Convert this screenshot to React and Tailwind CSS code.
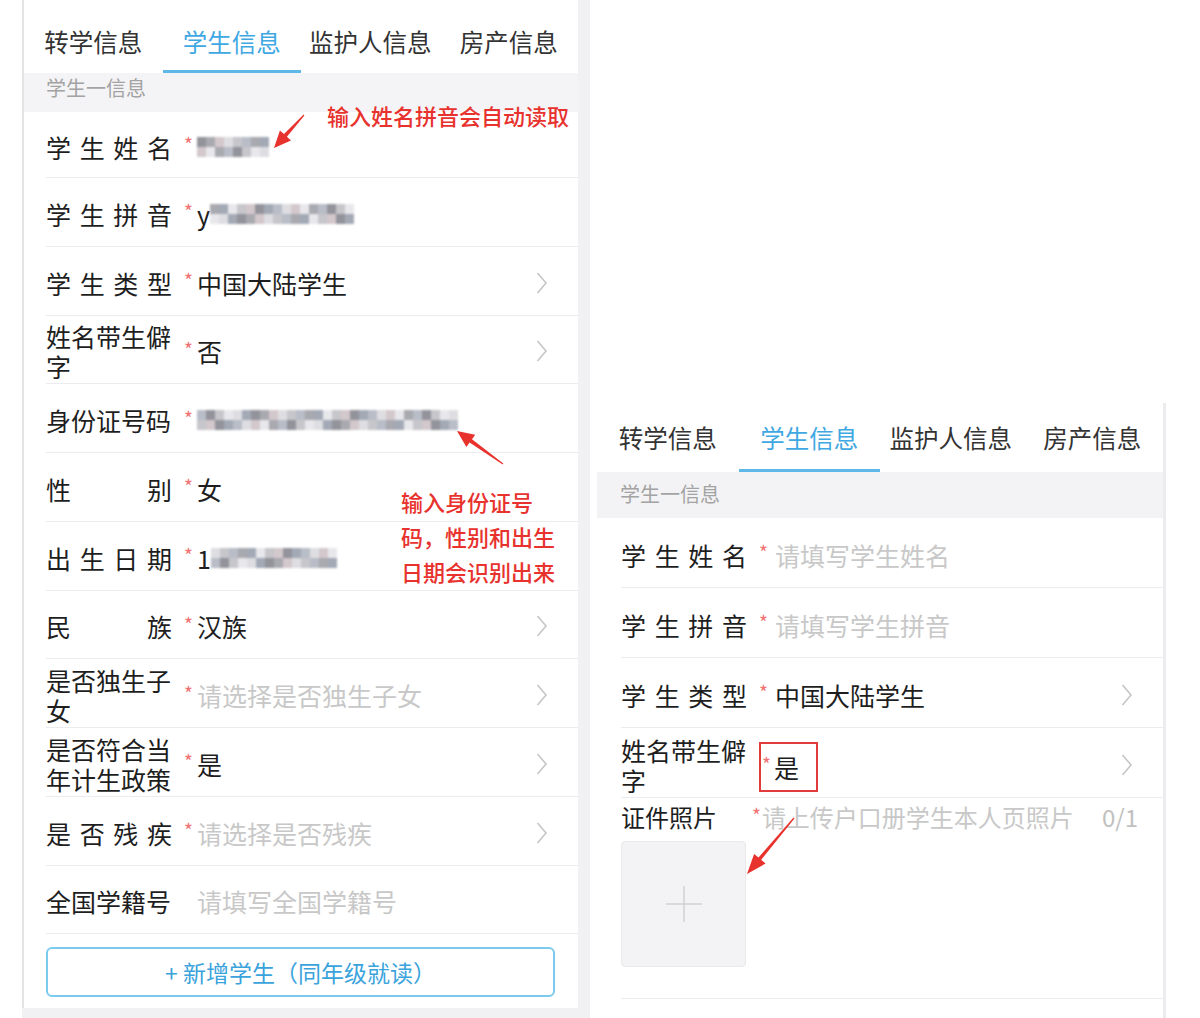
import React from "react";

const PALETTE = [
  "bg-[#c6c6cb]",
  "bg-[#a9a9b0]",
  "bg-[#dedee2]",
  "bg-[#93939b]",
  "bg-[#e8e8ec]",
  "bg-[#b9bdc7]",
  "bg-[#d3c8cc]",
  "bg-[#a3a9b5]",
];

function Mosaic({ cells, seed = 0 }) {
  const rows = [0, 1];
  return (
    <div className="flex flex-col blur-[0.8px]">
      {rows.map((r) => (
        <div key={r} className="flex">
          {Array.from({ length: cells }).map((_, i) => (
            <div
              key={i}
              className={`w-[9px] h-[10px] ${PALETTE[(i * 5 + r * 3 + seed + ((i * i) % 3)) % 8]}`}
            />
          ))}
        </div>
      ))}
    </div>
  );
}

function Label({ text, w = "w-[126px]" }) {
  if (text.length <= 4) {
    return (
      <div className={`${w} flex-none flex justify-between text-[25px] leading-[32px] text-[#1e1e1e]`}>
        {text.split("").map((c, i) => (
          <span key={i}>{c}</span>
        ))}
      </div>
    );
  }
  return (
    <div className={`${w} flex-none break-all text-[25px] leading-[30px] text-[#1e1e1e]`}>{text}</div>
  );
}

function Star() {
  return <span className="text-[19px] leading-none text-[#f07272] mb-[6px]">*</span>;
}

function Chevron() {
  return (
    <svg width="12" height="24" viewBox="0 0 12 24" className="ml-auto flex-none">
      <polyline points="1.5,2 10,12 1.5,22" fill="none" stroke="#c6c6c6" strokeWidth="1.6" />
    </svg>
  );
}

function Tabs({ variant }) {
  const tabs = ["转学信息", "学生信息", "监护人信息", "房产信息"];
  const rowCls = variant === "left" ? "h-[73px]" : "h-[69px]";
  const padCls = variant === "left" ? "pt-[26px]" : "pt-[19px]";
  return (
    <div className={`flex ${rowCls}`}>
      {tabs.map((t, i) => (
        <div
          key={t}
          className={`flex-1 flex justify-center ${padCls} text-[24.5px] leading-[32px] ${
            i === 1 ? "border-b-[3px] border-[#5db8e8] text-[#3fa8e2]" : "text-[#333333]"
          }`}
        >
          {t}
        </div>
      ))}
    </div>
  );
}

function Value({ children, placeholder }) {
  return (
    <div className={`text-[25px] leading-[32px] ${placeholder ? "text-[#c8c8c8]" : "text-[#1e1e1e]"}`}>
      {children}
    </div>
  );
}

function LeftRow({ label, req = true, children, chevron, first }) {
  return (
    <div
      className={`flex items-center pt-[4px] pr-[30px] border-b border-[#ececee] ${
        first ? "h-[66px]" : "h-[68.75px]"
      }`}
    >
      <Label text={label} />
      <div className="w-[25px] flex-none flex items-center pl-[12px]">{req ? <Star /> : null}</div>
      <div className="flex items-center">{children}</div>
      {chevron ? <Chevron /> : null}
    </div>
  );
}

function RightRow({ label, children, chevron }) {
  return (
    <div className="flex items-center pt-[4px] pr-[30px] h-[70px] border-b border-[#ececee]">
      <Label text={label} />
      {children}
      {chevron ? <Chevron /> : null}
    </div>
  );
}

function arrowPoints(x1, y1, x2, y2, headLen, headW, shaftW) {
  const dx = x2 - x1;
  const dy = y2 - y1;
  const L = Math.hypot(dx, dy);
  const ux = dx / L;
  const uy = dy / L;
  const px = -uy;
  const py = ux;
  const bx = x2 - ux * headLen;
  const by = y2 - uy * headLen;
  const pts = [
    [x1 + px * 0.6, y1 + py * 0.6],
    [bx + (px * shaftW) / 2, by + (py * shaftW) / 2],
    [bx + (px * headW) / 2, by + (py * headW) / 2],
    [x2, y2],
    [bx - (px * headW) / 2, by - (py * headW) / 2],
    [bx - (px * shaftW) / 2, by - (py * shaftW) / 2],
    [x1 - px * 0.6, y1 - py * 0.6],
  ];
  return pts.map((p) => p.map((v) => v.toFixed(1)).join(",")).join(" ");
}

export default function App() {
  return (
    <div className="relative w-[1200px] h-[1018px] bg-white overflow-hidden flex items-start font-['Noto_Sans_CJK_SC','Noto_Sans',sans-serif]">
      {/* Left phone screen */}
      <div className="ml-[22px] w-[568px] h-[1018px] flex-none bg-[#f1f1f3]">
        <div className="w-[556px] h-[1008px] bg-white border-l-2 border-[#e4e4e7] flex flex-col">
          <Tabs variant="left" />
          <div className="h-[39px] bg-[#f4f4f6] pl-[22px] pt-[4px] text-[20px] leading-[22px] text-[#a3a3a3]">
            学生一信息
          </div>
          <div className="pl-[22px] flex flex-col">
            <LeftRow label="学生姓名" first>
              <Mosaic cells={8} seed={3} />
            </LeftRow>
            <LeftRow label="学生拼音">
              <Value>y</Value>
              <Mosaic cells={16} seed={1} />
            </LeftRow>
            <LeftRow label="学生类型" chevron>
              <Value>中国大陆学生</Value>
            </LeftRow>
            <LeftRow label="姓名带生僻字" chevron>
              <Value>否</Value>
            </LeftRow>
            <LeftRow label="身份证号码">
              <Mosaic cells={29} seed={5} />
            </LeftRow>
            <LeftRow label="性别">
              <Value>女</Value>
            </LeftRow>
            <LeftRow label="出生日期">
              <Value>1</Value>
              <Mosaic cells={14} seed={2} />
            </LeftRow>
            <LeftRow label="民族" chevron>
              <Value>汉族</Value>
            </LeftRow>
            <LeftRow label="是否独生子女" chevron>
              <Value placeholder>请选择是否独生子女</Value>
            </LeftRow>
            <LeftRow label="是否符合当年计生政策" chevron>
              <Value>是</Value>
            </LeftRow>
            <LeftRow label="是否残疾" chevron>
              <Value placeholder>请选择是否残疾</Value>
            </LeftRow>
            <LeftRow label="全国学籍号" req={false}>
              <Value placeholder>请填写全国学籍号</Value>
            </LeftRow>
            <button className="mt-[13px] w-[509px] h-[50px] rounded-[6px] border-2 border-[#7ccbee] bg-white text-[23px] leading-[30px] text-[#3aa3dc] flex items-center justify-center">
              + 新增学生（同年级就读）
            </button>
          </div>
        </div>
      </div>

      {/* Right phone screen */}
      <div className="mt-[403px] ml-[7px] w-[569px] h-[615px] flex-none bg-white border-r-[3px] border-[#ececef] flex flex-col">
        <Tabs variant="right" />
        <div className="h-[46px] bg-[#f3f3f5] pl-[23px] pt-[11px] text-[20px] leading-[22px] text-[#a3a3a3]">
          学生一信息
        </div>
        <div className="pl-[24px] flex flex-col">
          <RightRow label="学生姓名">
            <div className="w-[28px] flex-none flex items-center pl-[12px]">
              <Star />
            </div>
            <Value placeholder>请填写学生姓名</Value>
          </RightRow>
          <RightRow label="学生拼音">
            <div className="w-[28px] flex-none flex items-center pl-[12px]">
              <Star />
            </div>
            <Value placeholder>请填写学生拼音</Value>
          </RightRow>
          <RightRow label="学生类型" chevron>
            <div className="w-[28px] flex-none flex items-center pl-[12px]">
              <Star />
            </div>
            <Value>中国大陆学生</Value>
          </RightRow>
          <RightRow label="姓名带生僻字" chevron>
            <div className="ml-[12px] w-[59px] h-[50px] border-2 border-[#e23b3b] flex items-center pl-[1px] mt-[4px]">
              <Star />
              <div className="ml-[3px] text-[25px] leading-[32px] text-[#1e1e1e]">是</div>
            </div>
          </RightRow>
          <div className="h-[201px] border-b border-[#ececee] pt-[3px] flex flex-col">
            <div className="flex items-center pr-[25px]">
              <div className="w-[131px] flex-none text-[24px] leading-[32px] text-[#1e1e1e]">证件照片</div>
              <Star />
              <div className="ml-[1px] text-[24px] leading-[32px] text-[#c8c8c8]">请上传户口册学生本人页照片</div>
              <div className="ml-auto text-[24px] leading-[32px] text-[#c0c0c0]">0/1</div>
            </div>
            <div className="mt-[8px] w-[125px] h-[126px] rounded-[4px] bg-[#f3f3f5] border border-[#e9e9ec] flex items-center justify-center">
              <svg width="42" height="42" viewBox="0 0 42 42">
                <line x1="21" y1="3" x2="21" y2="39" stroke="#d2d2d4" strokeWidth="1.6" />
                <line x1="3" y1="21" x2="39" y2="21" stroke="#d2d2d4" strokeWidth="1.6" />
              </svg>
            </div>
          </div>
        </div>
      </div>

      {/* Annotations */}
      <div className="absolute left-[327px] top-[100px] text-[22px] leading-[30px] text-[#e8322e] font-medium whitespace-nowrap">
        输入姓名拼音会自动读取
      </div>
      <div className="absolute left-[401px] top-[484px] w-[170px] text-[22px] leading-[35px] text-[#e8322e] font-medium">
        <div>输入身份证号</div>
        <div>码，性别和出生</div>
        <div>日期会识别出来</div>
      </div>
      <svg className="absolute left-0 top-0 pointer-events-none" width="1200" height="1018" viewBox="0 0 1200 1018">
        <polygon points={arrowPoints(304, 115, 274, 148, 17, 15, 4)} fill="#e8322e" />
        <polygon points={arrowPoints(503, 464, 457, 431, 17, 15, 4)} fill="#e8322e" />
        <polygon points={arrowPoints(794, 818, 747, 874, 20, 15, 3.5)} fill="#e8322e" />
      </svg>
    </div>
  );
}
